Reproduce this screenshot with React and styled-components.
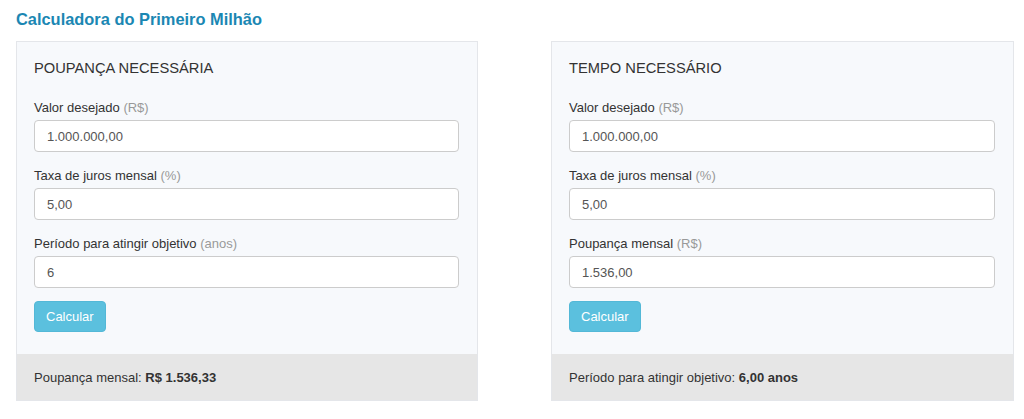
import React from "react";
import styled, { createGlobalStyle } from "styled-components";

const Global = createGlobalStyle`
  html, body { margin: 0; padding: 0; background: #fff; }
  body { font-family: "Liberation Sans", Arial, sans-serif; color: #333; }
  * { box-sizing: border-box; }
`;

const Page = styled.div`
  padding: 9px 10px 0 16px;
`;

const Title = styled.h1`
  margin: 0 0 12px;
  font-size: 16.4px;
  line-height: 20px;
  font-weight: bold;
  color: #1b87b3;
`;

const Columns = styled.div`
  display: grid;
  grid-template-columns: 462px 463px;
  column-gap: 73px;
`;

const Card = styled.section`
  background: #f7f9fc;
  border: 1px solid #e4e6ea;
  display: flex;
  flex-direction: column;
`;

const Body = styled.div`
  padding: 17px 18px 22px 17px;
`;

const Heading = styled.h2`
  margin: 0 0 22px;
  font-size: 14.7px;
  line-height: 18px;
  font-weight: normal;
  color: #333;
`;

const Group = styled.div`
  display: flex;
  flex-direction: column;
  gap: 4px;
  margin-bottom: 15px;
`;

const Label = styled.label`
  font-size: 13px;
  line-height: 17px;
  color: #333;
`;

const Hint = styled.span`
  color: #999;
`;

const Input = styled.input`
  height: 32px;
  width: 100%;
  border: 1px solid #ccc;
  border-radius: 4px;
  background: #fff;
  padding: 0 12px;
  font-family: "Liberation Sans", Arial, sans-serif;
  font-size: 13px;
  color: #555;
  outline: none;
`;

const Button = styled.button`
  margin-top: -2px;
  height: 31px;
  padding: 0 11px;
  border: 1px solid #53b8d7;
  border-radius: 4px;
  background: #5bc0de;
  color: #fff;
  font-family: "Liberation Sans", Arial, sans-serif;
  font-size: 13px;
  cursor: pointer;
`;

const Footer = styled.div`
  background: #e6e6e6;
  padding: 15px 18px 14px 17px;
  font-size: 13px;
  line-height: 17px;
  color: #333;
`;

const Field = ({ label, hint, value }) => (
  <Group>
    <Label>
      {label} <Hint>({hint})</Hint>
    </Label>
    <Input defaultValue={value} />
  </Group>
);

const Calc = ({ title, fields, result, value }) => (
  <Card>
    <Body>
      <Heading>{title}</Heading>
      {fields.map((f) => (
        <Field key={f.label} {...f} />
      ))}
      <Button>Calcular</Button>
    </Body>
    <Footer>
      {result} <b>{value}</b>
    </Footer>
  </Card>
);

export default function App() {
  return (
    <Page>
      <Global />
      <Title>Calculadora do Primeiro Milhão</Title>
      <Columns>
        <Calc
          title="POUPANÇA NECESSÁRIA"
          fields={[
            { label: "Valor desejado", hint: "R$", value: "1.000.000,00" },
            { label: "Taxa de juros mensal", hint: "%", value: "5,00" },
            { label: "Período para atingir objetivo", hint: "anos", value: "6" },
          ]}
          result="Poupança mensal:"
          value="R$ 1.536,33"
        />
        <Calc
          title="TEMPO NECESSÁRIO"
          fields={[
            { label: "Valor desejado", hint: "R$", value: "1.000.000,00" },
            { label: "Taxa de juros mensal", hint: "%", value: "5,00" },
            { label: "Poupança mensal", hint: "R$", value: "1.536,00" },
          ]}
          result="Período para atingir objetivo:"
          value="6,00 anos"
        />
      </Columns>
    </Page>
  );
}
